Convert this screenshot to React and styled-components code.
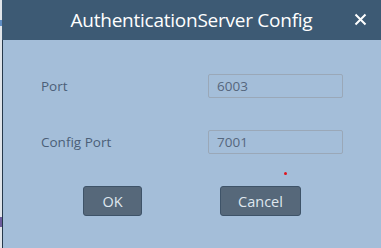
import styled, { createGlobalStyle } from "styled-components";

const GlobalStyle = createGlobalStyle`
  html, body {
    margin: 0;
    padding: 0;
    width: 381px;
    height: 248px;
    overflow: hidden;
    background: #e1e5ea;
  }
  #root {
    height: 100%;
  }
`;

const fields = [
  { label: "Port", value: "6003" },
  { label: "Config Port", value: "7001" },
];

const App = () => {
  return (
    <>
      <GlobalStyle />
      <Page>
        <BackStrip>
          <Mark color="#5f8dc4" top={20} height={6} />
          <Mark color="#6d5c9c" top={191} height={10} />
        </BackStrip>
        <Dialog>
          <Header>
            <Title>AuthenticationServer Config</Title>
            <CloseButton aria-label="close">
              <svg width="13" height="13" viewBox="0 0 13 13">
                <path
                  d="M1.5 1.5 L11.5 11.5 M11.5 1.5 L1.5 11.5"
                  stroke="#ffffff"
                  strokeWidth="2"
                  fill="none"
                />
              </svg>
            </CloseButton>
          </Header>
          <Body>
            <Form>
              {fields.map((f) => (
                <Row key={f.label}>
                  <Label>{f.label}</Label>
                  <Input defaultValue={f.value} />
                </Row>
              ))}
            </Form>
            <Buttons>
              <Button width={59}>OK</Button>
              <Button width={81}>Cancel</Button>
            </Buttons>
            <Dot />
          </Body>
        </Dialog>
      </Page>
    </>
  );
};

const Page = styled.div`
  display: flex;
  height: 100%;
  font-family: "Open Sans", "Noto Sans", sans-serif;
`;

const BackStrip = styled.div`
  width: 2px;
  flex-shrink: 0;
  display: flex;
  flex-direction: column;
`;

const Mark = styled.div`
  width: 2px;
  height: ${(p) => p.height}px;
  margin-top: ${(p) => p.top}px;
  background: ${(p) => p.color};
`;

const Dialog = styled.div`
  flex: 1;
  display: flex;
  flex-direction: column;
  border-left: 1px solid #26394b;
  background: #a4bed9;
`;

const Header = styled.div`
  height: 40px;
  flex-shrink: 0;
  background: #3d5a74;
  display: flex;
  align-items: center;
  justify-content: center;
  position: relative;
  margin-left: -1px;
`;

const Title = styled.span`
  color: #ffffff;
  font-size: 19px;
  letter-spacing: -0.25px;
  margin-top: -1px;
`;

const CloseButton = styled.button`
  position: absolute;
  right: 14px;
  top: 13px;
  padding: 0;
  border: none;
  background: transparent;
  display: flex;
  cursor: pointer;
`;

const Body = styled.div`
  position: relative;
  flex: 1;
  padding: 34px 0 0 38px;
`;

const Form = styled.div`
  display: flex;
  flex-direction: column;
  gap: 32px;
`;

const Row = styled.div`
  display: grid;
  grid-template-columns: 167px 135px;
  align-items: center;
`;

const Label = styled.span`
  color: #4b5f78;
  font-size: 13.5px;
`;

const Input = styled.input`
  box-sizing: border-box;
  width: 135px;
  height: 24px;
  padding: 0 8px;
  border: 1px solid #9aa8b8;
  border-radius: 2px;
  background: transparent;
  color: #56677d;
  font-family: inherit;
  font-size: 13.5px;
  outline: none;
`;

const Buttons = styled.div`
  display: flex;
  gap: 78px;
  margin: 32px 0 0 42px;
`;

const Button = styled.button`
  box-sizing: border-box;
  width: ${(p) => p.width}px;
  height: 30px;
  border: 1px solid #3e5368;
  border-radius: 3px;
  background: #56687a;
  color: #dfe7ef;
  font-family: inherit;
  font-size: 14.5px;
  padding: 0;
  cursor: pointer;
`;

const Dot = styled.div`
  position: absolute;
  left: 281px;
  top: 132px;
  width: 3px;
  height: 3px;
  border-radius: 50%;
  background: #e0141e;
`;

export default App;
